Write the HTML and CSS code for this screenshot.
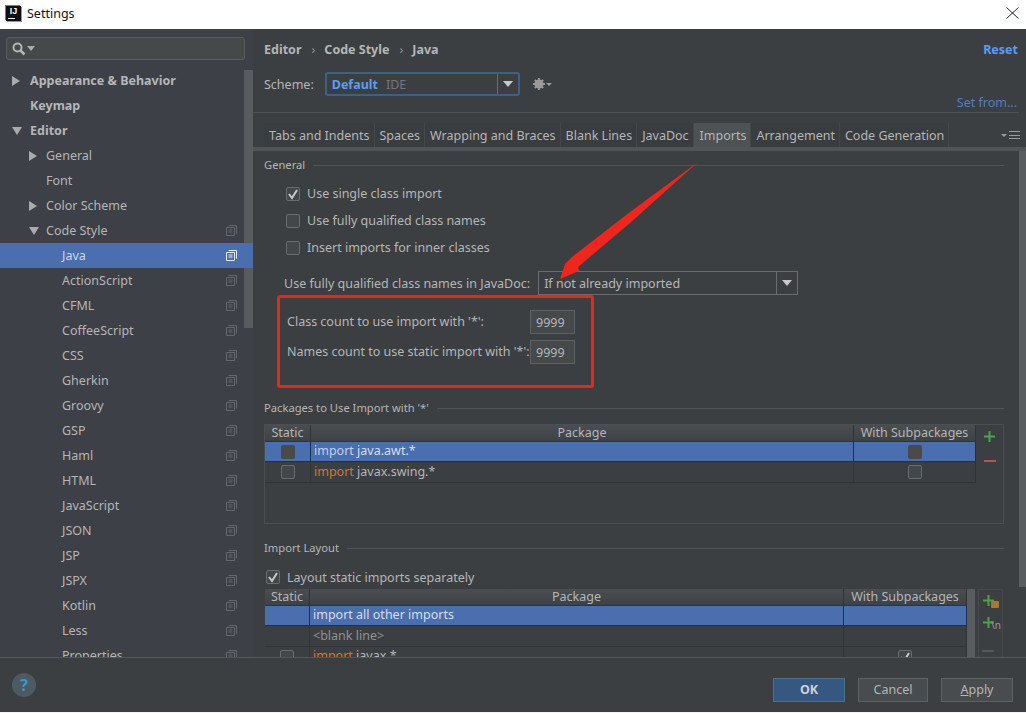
FILE: index.html
```html
<!DOCTYPE html>
<html lang="en">
<head>
<meta charset="utf-8">
<title>Settings</title>
<link rel="stylesheet" href="styles.css">
</head>
<body>
<svg class="defs" width="0" height="0" aria-hidden="true">
  <symbol id="copy" viewBox="0 0 11 11"><path d="M2.5 .5h8v8M.5 2.5h8v8h-8z M2.5 5h4M2.5 7h4" fill="none" stroke="currentColor"/></symbol>
  <symbol id="check" viewBox="0 0 14 14"><path d="M3 7l3 4 5-8" fill="none" stroke="#c8c8c8" stroke-width="2"/></symbol>
  <symbol id="plus" viewBox="0 0 13 13"><path d="M6.500 1v11M1 6.500h11" fill="none" stroke="#4ba24b" stroke-width="2"/></symbol>
</svg>
<div class="app">
  <header class="titlebar">
    <span class="logo"><span class="logo-text">IJ</span><span class="logo-bar"></span></span>
    <span class="title">Settings</span>
    <svg class="close" width="13" height="12" viewBox="0 0 13 12"><path d="M.5 .5l12 11M12.500 .5l-12 11" stroke="#222" fill="none"/></svg>
  </header>
  <main class="main">
    <aside class="sidebar">
      <div class="search">
        <svg width="14" height="14" viewBox="0 0 14 14"><circle cx="5.500" cy="5.500" r="4" fill="none" stroke="#b5b5b5" stroke-width="2"/><path d="M8.500 8.500l4 4" stroke="#b5b5b5" stroke-width="2.500"/></svg>
        <span class="tri-down small"></span>
      </div>
      <div class="thumb"></div>
      <ul class="tree">
        <li class="row bold lvl0"><span class="tri-right"></span>Appearance &amp; Behavior</li>
        <li class="row bold lvl0 noarrow">Keymap</li>
        <li class="row bold lvl0"><span class="tri-down"></span>Editor</li>
        <li class="row lvl1"><span class="tri-right"></span>General</li>
        <li class="row lvl1 noarrow">Font</li>
        <li class="row lvl1"><span class="tri-right"></span>Color Scheme</li>
        <li class="row lvl1"><span class="tri-down"></span>Code Style<svg class="copy"><use href="#copy"/></svg></li>
        <li class="row lvl2 selected">Java<svg class="copy"><use href="#copy"/></svg></li>
        <li class="row lvl2">ActionScript<svg class="copy"><use href="#copy"/></svg></li>
        <li class="row lvl2">CFML<svg class="copy"><use href="#copy"/></svg></li>
        <li class="row lvl2">CoffeeScript<svg class="copy"><use href="#copy"/></svg></li>
        <li class="row lvl2">CSS<svg class="copy"><use href="#copy"/></svg></li>
        <li class="row lvl2">Gherkin<svg class="copy"><use href="#copy"/></svg></li>
        <li class="row lvl2">Groovy<svg class="copy"><use href="#copy"/></svg></li>
        <li class="row lvl2">GSP<svg class="copy"><use href="#copy"/></svg></li>
        <li class="row lvl2">Haml<svg class="copy"><use href="#copy"/></svg></li>
        <li class="row lvl2">HTML<svg class="copy"><use href="#copy"/></svg></li>
        <li class="row lvl2">JavaScript<svg class="copy"><use href="#copy"/></svg></li>
        <li class="row lvl2">JSON<svg class="copy"><use href="#copy"/></svg></li>
        <li class="row lvl2">JSP<svg class="copy"><use href="#copy"/></svg></li>
        <li class="row lvl2">JSPX<svg class="copy"><use href="#copy"/></svg></li>
        <li class="row lvl2">Kotlin<svg class="copy"><use href="#copy"/></svg></li>
        <li class="row lvl2">Less<svg class="copy"><use href="#copy"/></svg></li>
        <li class="row lvl2">Properties<svg class="copy"><use href="#copy"/></svg></li>
      </ul>
    </aside>
    <section class="panel">
      <div class="crumbs">
        <span class="crumb">Editor</span><span class="sep">›</span><span class="crumb">Code Style</span><span class="sep">›</span><span class="crumb">Java</span>
        <a class="reset">Reset</a>
      </div>
      <div class="scheme">
        <span>Scheme:</span>
        <div class="scheme-combo"><b class="scheme-name">Default</b><span class="scheme-ide">IDE</span><span class="combo-btn"><span class="tri-down small light"></span></span></div>
        <svg class="gear" width="14" height="14" viewBox="0 0 14 14"><circle cx="7" cy="7" r="3.200" fill="none" stroke="#9a9a9a" stroke-width="2.600"/><path d="M7 1v12M1 7h12M2.800 2.800l8.400 8.400M11.200 2.800l-8.400 8.400" stroke="#9a9a9a" stroke-width="1.800"/></svg>
        <span class="tri-down tiny"></span>
      </div>
      <div class="setfrom"><a>Set from...</a></div>
      <nav class="tabs">
        <span class="tab">Tabs and Indents</span><span class="tab">Spaces</span><span class="tab">Wrapping and Braces</span><span class="tab">Blank Lines</span><span class="tab">JavaDoc</span><span class="tab active">Imports</span><span class="tab">Arrangement</span><span class="tab">Code Generation</span>
        <span class="tabs-menu"><span class="tri-down tiny"></span><span class="lines"></span></span>
      </nav>
      <div class="content">
        <div class="pane">
          <div class="legend first"><span>General</span></div>
          <div class="options">
            <label class="check"><span class="box"><svg width="14" height="14"><use href="#check"/></svg></span>Use single class import</label>
            <label class="check"><span class="box"></span>Use fully qualified class names</label>
            <label class="check"><span class="box"></span>Insert imports for inner classes</label>
          </div>
          <div class="javadoc">
            <span class="javadoc-label">Use fully qualified class names in JavaDoc:</span>
            <div class="combo"><span>If not already imported</span><span class="combo-btn"><span class="tri-down small light"></span></span></div>
          </div>
          <div class="counts">
            <div class="count"><span class="count-label">Class count to use import with '*':</span><span class="field">9999</span></div>
            <div class="count"><span class="count-label">Names count to use static import with '*':</span><span class="field">9999</span></div>
          </div>
          <div class="legend pkg"><span>Packages to Use Import with '*'</span></div>
          <div class="tablewrap bordered">
            <div class="table t1">
              <div class="cell head">Static</div><div class="cell head">Package</div><div class="cell head">With Subpackages</div>
              <div class="cell sel center"><span class="sq dark"></span></div><div class="cell sel"><span><span class="kw-sel">import</span> java.awt.*</span></div><div class="cell sel center"><span class="sq dark"></span></div>
              <div class="cell center"><span class="sq"></span></div><div class="cell"><span><span class="kw">import</span> javax.swing.*</span></div><div class="cell center"><span class="sq"></span></div>
            </div>
            <div class="tools">
              <svg width="13" height="13"><use href="#plus"/></svg>
              <span class="minus"></span>
            </div>
          </div>
          <div class="legend layout"><span>Import Layout</span></div>
          <label class="check layout-check"><span class="box"><svg width="14" height="14"><use href="#check"/></svg></span>Layout static imports separately</label>
          <div class="tablewrap second">
            <div class="table t2">
              <div class="cell head">Static</div><div class="cell head">Package</div><div class="cell head">With Subpackages</div>
              <div class="cell sel"></div><div class="cell sel">import all other imports</div><div class="cell sel"></div>
              <div class="cell"></div><div class="cell dim">&lt;blank line&gt;</div><div class="cell"></div>
              <div class="cell center"><span class="sq"></span></div><div class="cell"><span><span class="kw">import</span> javax.*</span></div><div class="cell center"><span class="sq"><svg width="14" height="14"><use href="#check"/></svg></span></div>
            </div>
            <div class="tbar"></div>
            <div class="tools tools2">
              <span class="tool"><svg width="13" height="13"><use href="#plus"/></svg><span class="badge"></span></span>
              <span class="tool"><svg width="13" height="13"><use href="#plus"/></svg><span class="nl">\n</span></span>
              <span class="minus gray"></span>
            </div>
          </div>
        </div>
        <div class="scrollbar"></div>
      </div>
    </section>
  </main>
  <footer class="footer">
    <span class="help">?</span>
    <div class="buttons">
      <span class="btn primary">OK</span>
      <span class="btn cancel">Cancel</span>
      <span class="btn"><span><u>A</u>pply</span></span>
    </div>
  </footer>
  <div class="redbox"></div>
  <svg class="arrow" width="1026" height="713" viewBox="0 0 1026 713"><polygon points="698,162 630,212 572,257 565,264 560,279 579,271 578,267 630,223" fill="#f0261c"/></svg>
</div>
</body>
</html>
```
FILE: styles.css
```css
* { box-sizing: border-box; }
html, body { margin: 0; padding: 0; background: #f4f4f4; }
body { font: 12.5px/1.2 "Noto Sans", "Open Sans", sans-serif; color: #b4b6b7; width: 1026px; height: 713px; overflow: hidden; }
.defs { position: absolute; }
ul { list-style: none; margin: 0; padding: 0; }

.app { position: relative; height: 712px; display: flex; flex-direction: column; background: #3c3f41; }

.titlebar { height: 29px; flex: none; background: #fff; display: flex; align-items: center; padding: 0 7px 3px 6px; color: #111; }
.logo { width: 15px; height: 15px; background: #0c0f14; box-shadow: -1px -1px 0 #3b8ec9, 1px 1px 0 #5aa7d8; display: flex; flex-direction: column; align-items: center; margin-right: 6px; }
.logo-text { font: bold 9px/10px "Liberation Sans", sans-serif; color: #fff; }
.logo-bar { width: 7px; height: 1px; margin: 2px 0 0 -4px; background: #fff; }
.close { margin-left: auto; }

.main { height: 628px; flex: none; display: flex; overflow: hidden; }

.sidebar { width: 253px; flex: none; position: relative; background: #3d4047; padding-top: 8px; overflow: hidden; }
.search { margin: 0 8px 8px 6px; height: 23px; background: #45494a; border: 1px solid #5a5d5f; border-radius: 3px; display: flex; align-items: center; padding-left: 5px; gap: 1px; }
.thumb { position: absolute; left: 244px; top: 41px; width: 9px; height: 258px; background: #585b5f; }
.row { height: 25px; display: flex; align-items: center; position: relative; white-space: nowrap; }
.bold { font-weight: 700; }
.lvl0 { padding-left: 12px; }
.lvl0.noarrow { padding-left: 30px; }
.lvl1 { padding-left: 29px; }
.lvl1.noarrow { padding-left: 46px; }
.lvl2 { padding-left: 62px; }
.lvl0 .tri-right { margin-right: 9px; }
.lvl0 .tri-down { margin-right: 8px; }
.lvl1 .tri-right { margin-right: 8px; }
.lvl1 .tri-down { margin-right: 7px; }
.selected { background: #4b6eaf; color: #ccd6e8; }
.copy { position: absolute; left: 226px; top: 7px; width: 11px; height: 11px; color: #64686d; }
.selected .copy { color: #e6ecf5; }

.tri-right { display: inline-block; width: 9px; border-left: 8px solid #a9abad; border-top: 5px solid transparent; border-bottom: 5px solid transparent; height: 10px; }
.tri-down { display: inline-block; width: 10px; height: 8px; border-top: 8px solid #a9abad; border-left: 5px solid transparent; border-right: 5px solid transparent; }
.tri-down.small { width: 8px; height: 5px; border-top-width: 5px; border-left-width: 4px; border-right-width: 4px; }
.tri-down.light { border-top-color: #c9c9c9; width: 10px; height: 6px; border-top-width: 6px; border-left-width: 5px; border-right-width: 5px; }
.tri-down.tiny { width: 6px; height: 3px; border-top: 3px solid #9a9a9a; border-left: 3px solid transparent; border-right: 3px solid transparent; }

.panel { flex: 1; min-width: 0; display: flex; flex-direction: column; padding-top: 8px; }
.crumbs { height: 24px; display: flex; align-items: center; padding: 1px 8px 0 11px; font-weight: 700; }
.sep { font-weight: 400; margin: 0 9px 0 10px; color: #8f9193; }
.reset { margin-left: auto; color: #589df6; }
.scheme { height: 24px; margin-top: 11px; display: flex; align-items: center; padding-left: 11px; }
.scheme > span:first-child { padding-top: 1px; }
.scheme-combo { width: 195px; height: 24px; margin-left: 11px; display: flex; align-items: center; border: 2px solid #3d6185; border-radius: 3px; padding-left: 5px; position: relative; background: #3c3f41; }
.scheme-name { color: #589df6; }
.scheme-ide { margin-left: 8px; color: #72767a; }
.combo-btn { margin-left: auto; width: 21px; align-self: stretch; border-left: 1px solid #6a6d6f; display: flex; align-items: center; justify-content: center; }
.gear { margin-left: 12px; }
.setfrom { height: 17px; text-align: right; border-bottom: 1px solid #505355; margin-right: 7px; padding-right: 2px; line-height: 14px; color: #4f7fbf; }
.tabs { height: 24px; margin-top: 10px; padding-left: 11px; display: flex; align-items: stretch; }
.tab { padding: 2px 4px 0 5px; display: flex; align-items: center; background: #3a3d3f; border-right: 1px solid #45484a; white-space: nowrap; line-height: 1; }
.tab.active { background: #4e5254; padding: 2px 4px 0 6px; }
.tabs-menu { margin-left: auto; display: flex; align-items: center; gap: 2px; padding: 0 6px 0 0; }
.lines { width: 11px; height: 8px; border-top: 1px solid #9a9a9a; border-bottom: 1px solid #9a9a9a; background: linear-gradient(#9a9a9a,#9a9a9a) center/100% 1px no-repeat; }

.content { flex: 1; min-height: 0; border-top: 4px solid #515456; position: relative; overflow: hidden; }
.pane { padding: 6px 22px 0 11px; }
.scrollbar { position: absolute; left: 766px; top: 0; width: 7px; height: 436px; background: #5a5d5f; }
.legend { display: flex; align-items: center; gap: 8px; font-size: 11.2px; height: 16px; }
.legend::after { content: ""; flex: 1; height: 1px; background: #515456; }
.pkg { margin-top: 36px; }
.layout { margin-top: 16px; }
.options { margin-top: 7px; padding-left: 22px; }
.check { display: flex; align-items: center; height: 27px; gap: 7px; }
.box { width: 14px; height: 14px; border: 1px solid #6a6d6f; border-radius: 2px; background: #43474a; display: block; line-height: 0; }
.box svg { margin: -1px; }
.javadoc { display: flex; align-items: center; height: 24px; margin-top: 10px; padding-left: 20px; }
.javadoc-label { white-space: nowrap; }
.combo { width: 260px; height: 24px; margin-left: 8px; border: 1px solid #6a6d6f; display: flex; align-items: center; padding-left: 5px; }
.counts { margin-top: 15px; padding-left: 23px; }
.count { display: flex; align-items: center; justify-content: space-between; width: 288px; height: 24px; margin-bottom: 6px; white-space: nowrap; }
.count-label { padding-bottom: 1px; }
.field { width: 45px; height: 24px; border: 1px solid #5e6163; background: #45494a; display: flex; align-items: center; padding-left: 5px; }

.tablewrap { display: flex; height: 100px; margin-top: 8px; }
.bordered { border: 1px solid #4c4f51; }
.second { height: 80px; margin: 0 1px; }
.table { flex: 1; display: grid; grid-template-columns: 46px 1fr 122px; grid-auto-rows: 20px; align-content: start; min-width: 0; }
.t1 { grid-template-rows: 17px 20px 21px; }
.t2 { grid-template-rows: 17px 20px 21px 20px; grid-template-columns: 45px 1fr 123px; }
.cell { display: flex; align-items: center; padding-left: 3px; border-right: 1px solid #313335; border-bottom: 1px solid #313335; white-space: nowrap; overflow: hidden; line-height: 1; }
.head { background: linear-gradient(#4b4e50, #3f4244); justify-content: center; padding: 0; }
.sel { background: #4b6eaf; color: #d6deec; border-color: #1d2f54; }
.center { justify-content: center; padding: 0; }
.dim { color: #8f9193; }
.kw { color: #cc7832; }
.kw-sel { color: #c3cfe6; }
.sq { width: 14px; height: 14px; border: 1px solid #6a6d6f; border-radius: 2px; background: #43474a; line-height: 0; }
.sq.dark { background: #4a4a4a; border-color: #4a4a4a; }
.sq svg { margin: -1px; }
.tools { width: 27px; display: flex; flex-direction: column; align-items: center; padding-top: 5px; gap: 17px; flex: none; }
.minus { width: 12px; height: 2px; background: #b5554f; }
.tbar { width: 8px; background: #595c5e; flex: none; }
.tools2 { border: 1px solid #47494b; border-bottom: 0; width: 25px; margin-left: 3px; gap: 9px; padding: 4px 0 0 3px; align-items: flex-start; }
.minus.gray { background: #55585a; margin-top: 12px; }
.tool { position: relative; display: flex; }
.badge { position: absolute; left: 9px; top: 7px; width: 8px; height: 7px; background: #a8792e; border-radius: 1px; }
.nl { position: absolute; left: 9px; top: 3px; font-size: 10px; color: #9a9a9a; }
.layout-check { padding-left: 2px; margin-top: 9px; height: 24px; }

.footer { flex: 1; display: flex; align-items: center; justify-content: space-between; border-top: 1px solid #55585a; padding: 0 13px 0 12px; }
.help { width: 24px; height: 24px; border-radius: 50%; background: #4e5a62; color: #3e97c9; font: 700 16px/24px "Noto Sans", sans-serif; text-align: center; }
.buttons { display: flex; gap: 13px; margin-top: 9px; }
.btn { width: 72px; height: 24px; display: flex; align-items: center; justify-content: center; background: #494c4e; border: 1px solid #5e6163; }
.btn.cancel { width: 70px; }
.btn.primary { background: #365880; border-color: #4c708c; font-weight: 700; color: #c9d3df; }

.redbox { position: absolute; left: 277px; top: 295px; width: 317px; height: 93px; border: 3px solid #e5271e; border-radius: 3px; }
.arrow { position: absolute; left: 0; top: 0; pointer-events: none; }
```
